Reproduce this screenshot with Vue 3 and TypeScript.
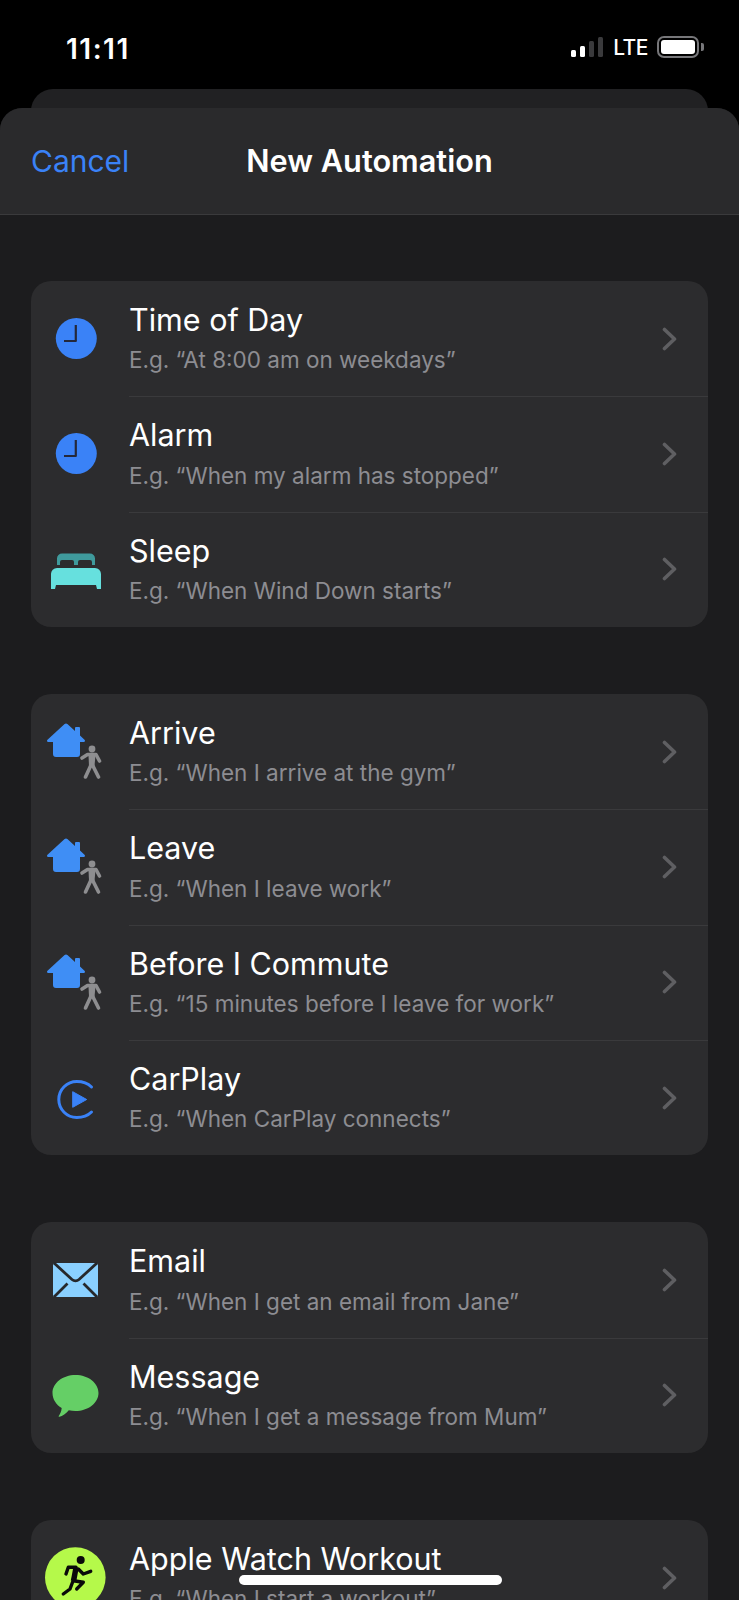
<script setup lang="ts">
type Row = { icon: string; title: string; sub: string }

const groups: Row[][] = [
  [
    { icon: 'clock', title: 'Time of Day', sub: 'E.g. “At 8:00 am on weekdays”' },
    { icon: 'clock', title: 'Alarm', sub: 'E.g. “When my alarm has stopped”' },
    { icon: 'bed', title: 'Sleep', sub: 'E.g. “When Wind Down starts”' },
  ],
  [
    { icon: 'home', title: 'Arrive', sub: 'E.g. “When I arrive at the gym”' },
    { icon: 'home', title: 'Leave', sub: 'E.g. “When I leave work”' },
    { icon: 'home', title: 'Before I Commute', sub: 'E.g. “15 minutes before I leave for work”' },
    { icon: 'carplay', title: 'CarPlay', sub: 'E.g. “When CarPlay connects”' },
  ],
  [
    { icon: 'mail', title: 'Email', sub: 'E.g. “When I get an email from Jane”' },
    { icon: 'message', title: 'Message', sub: 'E.g. “When I get a message from Mum”' },
  ],
  [
    { icon: 'workout', title: 'Apple Watch Workout', sub: 'E.g. “When I start a workout”' },
  ],
]

const signal = [
  { h: 7, on: true },
  { h: 11, on: true },
  { h: 16, on: false },
  { h: 20, on: false },
]
</script>

<template>
  <div class="screen">
    <header class="status">
      <span class="time">11:11</span>
      <div class="status-right">
        <div class="signal">
          <i v-for="b in signal" :key="b.h" :class="{ on: b.on }" :style="{ height: b.h + 'px' }"></i>
        </div>
        <span class="lte">LTE</span>
        <div class="battery"><div class="level"></div></div>
        <div class="cap"></div>
      </div>
    </header>

    <div class="back-sheet"></div>

    <section class="sheet">
      <nav class="nav">
        <span class="cancel">Cancel</span>
        <span class="nav-title">New Automation</span>
      </nav>

      <div class="list">
        <div v-for="(group, g) in groups" :key="g" class="card">
          <div v-for="row in group" :key="row.title" class="row">
            <svg class="icon" width="92" height="115" viewBox="0 0 92 115">
              <template v-if="row.icon === 'clock'">
                <circle cx="46.3" cy="57.5" r="20.5" fill="#3a82f7" />
                <path d="M45.8 44V60H34" fill="none" stroke="#24283a" stroke-width="2.200" stroke-linejoin="round" />
              </template>
              <template v-else-if="row.icon === 'bed'">
                <path d="M27 53v-6.500a5 5 0 0 1 5-5h28a5 5 0 0 1 5 5V53h-3v-3a2 2 0 0 0-2-2H50a2 2 0 0 0-2 2v3h-4v-3a2 2 0 0 0-2-2H32a2 2 0 0 0-2 2v3z" fill="#3f9a9c" />
                <path d="M27 56h38a6 6 0 0 1 6 6v15h-4l-1-4H26l-1 4h-4V62a6 6 0 0 1 6-6z" fill="#66e0de" />
              </template>
              <template v-else-if="row.icon === 'home'">
                <path d="M36 29.500a2 2 0 0 1 1.400.6l7.600 6.900v-3a1 1 0 0 1 1-1h3a1 1 0 0 1 1 1v7.500l4.500 4.200c1 1 .5 2.300-.8 2.300H50v12a3 3 0 0 1-3 3H26a3 3 0 0 1-3-3v-12h-4.700c-1.300 0-1.800-1.300-.8-2.300L34.600 30.100a2 2 0 0 1 1.400-.6z" fill="#3f8ef5" />
                <circle cx="62" cy="55" r="3.400" fill="#8e8e90" />
                <path d="M52 64l5.500-3.500h8.500l3.500 6.500M61.500 62v10M61 71l-5.500 12M62.500 71l6 12" fill="none" stroke="#8e8e90" stroke-width="3.600" stroke-linecap="round" stroke-linejoin="round" />
                <path d="M58.500 61h7l-1 11h-5.500z" fill="#8e8e90" />
              </template>
              <template v-else-if="row.icon === 'carplay'">
                <path d="M61.500 47C58 43.500 53 41.500 46.800 41.500a18 18 0 1 0 0 36C53 77.500 58 75.500 61.500 72" fill="none" stroke="#3a82f7" stroke-width="3" stroke-linecap="round" />
                <path d="M42.700 51.700v15.600L56.700 59.500z" fill="#3a82f7" stroke="#3a82f7" stroke-width="1" stroke-linejoin="round" />
              </template>
              <template v-else-if="row.icon === 'mail'">
                <rect x="23" y="41" width="45" height="34" rx="2.500" fill="#8ad0ff" />
                <path d="M24 41l18 16.500c2 1.700 5 1.700 7 0L67 41M24 75l13.500-13.500M67 75L53.500 61.500" fill="none" stroke="#26282b" stroke-width="2.800" />
              </template>
              <template v-else-if="row.icon === 'message'">
                <path d="M45.500 37c12.700 0 23 8 23 18s-10.300 18-23 18c-2.400 0-4.600-.3-6.700-.8-2.500 3-6.500 5.800-9.300 6.600-.9.200-1-.6-.6-1.100 1.200-1.600 2.500-4.200 2.800-7.700C26.200 66.700 22.500 61.300 22.500 55c0-10 10.300-18 23-18z" fill="#65cf66" />
              </template>
              <template v-else-if="row.icon === 'workout'">
                <circle cx="45.300" cy="57.500" r="30.300" fill="#b5f94a" />
                <circle cx="50.700" cy="40" r="4" fill="#0a0a0a" />
                <path d="M46 48l-2.500 13" fill="none" stroke="#0a0a0a" stroke-width="5.500" stroke-linecap="butt" />
                <path d="M46 47.300H38.300L36 54M48.300 49l5 5 7.400-2.700M43.500 60.700l9.800 1.600-6.600 6.700M43 61l-3 8-6.700 5" fill="none" stroke="#0a0a0a" stroke-width="3.400" stroke-linecap="round" stroke-linejoin="round" />
              </template>
            </svg>
            <div class="text">
              <div class="title">{{ row.title }}</div>
              <div class="sub">{{ row.sub }}</div>
            </div>
            <svg class="chevron" width="15" height="24" viewBox="0 0 15 24">
              <path d="M2.500 2.500L12.500 12L2.500 21.500" fill="none" stroke="#5f5f62" stroke-width="3.600" stroke-linecap="round" stroke-linejoin="round" />
            </svg>
          </div>
        </div>
      </div>
    </section>

    <div class="home-bar"></div>
  </div>
</template>

<style>
body {
  background: #000;
}
</style>

<style scoped>
.screen {
  position: relative;
  width: 739px;
  height: 1600px;
  overflow: hidden;
  background: #000;
  font-family: Inter, "Noto Sans", sans-serif;
  color: #fff;
}

.status {
  display: flex;
  justify-content: space-between;
  height: 89px;
  padding: 32px 35px 0 66px;
  box-sizing: border-box;
}

.time {
  font-size: 28px;
  font-weight: 600;
  line-height: 34px;
  letter-spacing: 1.500px;
}

.status-right {
  display: flex;
  align-items: flex-start;
  padding-top: 4px;
}

.signal {
  display: flex;
  align-items: flex-end;
  gap: 4px;
  height: 21px;
}

.signal i {
  display: block;
  width: 5px;
  border-radius: 1.5px;
  background: #3a3a3c;
}

.signal i.on {
  background: #fff;
}

.lte {
  margin-left: 10px;
  font-size: 21px;
  font-weight: 500;
  line-height: 24px;
  letter-spacing: -0.500px;
}

.battery {
  margin-left: 9px;
  width: 42px;
  height: 22px;
  padding: 2px;
  box-sizing: border-box;
  border: 2px solid #77777a;
  border-radius: 7px;
}

.level {
  height: 100%;
  border-radius: 3px;
  background: #fff;
}

.cap {
  margin: 7px 0 0 2px;
  width: 3px;
  height: 8px;
  border-radius: 0 2px 2px 0;
  background: #77777a;
}

.back-sheet {
  height: 40px;
  margin: 0 31px -21px 31px;
  border-radius: 22px 22px 0 0;
  background: #212123;
}

.sheet {
  position: relative;
  border-radius: 22px 22px 0 0;
  background: #1c1c1e;
  overflow: hidden;
}

.nav {
  position: relative;
  display: flex;
  align-items: center;
  justify-content: center;
  height: 107px;
  background: #2a2a2c;
  border-bottom: 1px solid #3a3a3c;
  box-sizing: border-box;
}

.cancel {
  position: absolute;
  left: 31px;
  top: 32px;
  font-size: 30px;
  line-height: 42px;
  color: #3a82f7;
}

.nav-title {
  font-size: 30.700px;
  font-weight: 600;
  line-height: 42px;
}

.list {
  display: flex;
  flex-direction: column;
  gap: 67px;
  padding: 66px 31px 0 31px;
}

.card {
  border-radius: 20px;
  background: #2c2c2e;
}

.row {
  display: flex;
  align-items: center;
  position: relative;
  height: 115.33px;
}

.row + .row::before {
  content: '';
  position: absolute;
  left: 98px;
  right: 0;
  top: 0;
  height: 1px;
  background: #3a3a3c;
}

.icon {
  flex: none;
  margin: 0 7px 0 -1px;
}

.text {
  flex: 1;
  min-width: 0;
  padding-bottom: 1px;
}

.title {
  font-size: 30.500px;
  line-height: 38px;
  margin-top: -1px;
}

.sub {
  margin-top: 7.500px;
  font-size: 22.500px;
  line-height: 28px;
  color: #8d8d92;
}

.chevron {
  flex: none;
  margin-right: 31px;
}

.home-bar {
  position: absolute;
  left: 239px;
  top: 1575px;
  width: 263px;
  height: 10px;
  border-radius: 5px;
  background: #fff;
}
</style>
